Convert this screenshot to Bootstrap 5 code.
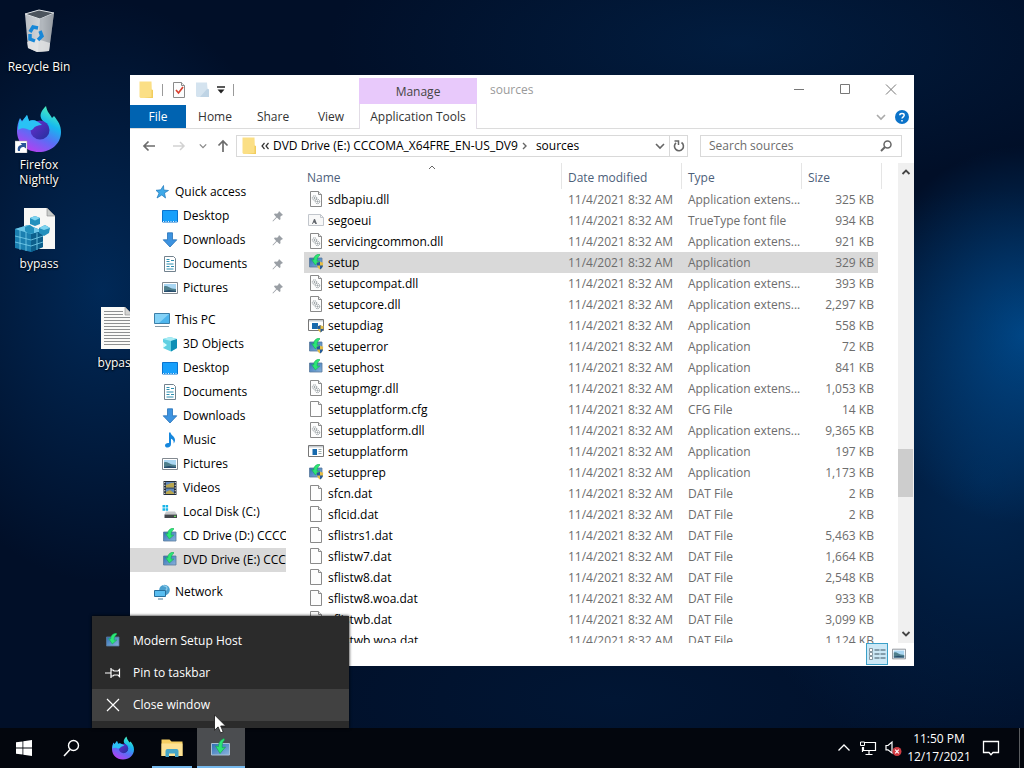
<!DOCTYPE html>
<html lang="en">
<head>
<meta charset="utf-8">
<meta name="viewport" content="width=device-width, initial-scale=1">
<title>sources</title>
<link rel="stylesheet" href="https://cdn.jsdelivr.net/npm/bootstrap@5.3.0/dist/css/bootstrap.min.css">
<style>
  body { font-family: "Open Sans", "Noto Sans", sans-serif; font-size: 12px; line-height: 16px; color: #000; background: #00040c; }
  svg { display: block; flex: none; }
  button { border: 0; background: none; padding: 0; color: inherit; }
  a { color: inherit; text-decoration: none; }
  .s16 { width: 16px; height: 16px; }

  .desk { min-height: 0; background:
    radial-gradient(ellipse 16% 26% at 100% 46%, rgba(0,88,164,.7), rgba(0,60,120,0) 100%),
    radial-gradient(ellipse 26% 40% at 96% 66%, rgba(0,56,112,.55), rgba(0,40,90,0) 100%),
    radial-gradient(ellipse 40% 20% at 72% 6%, rgba(2,42,86,.5), rgba(0,40,90,0) 100%),
    radial-gradient(ellipse 20% 40% at 10% 40%, rgba(0,58,118,.6), rgba(0,40,90,0) 100%),
    radial-gradient(ellipse 40% 20% at 60% 96%, rgba(0,38,80,.3), rgba(0,40,90,0) 100%),
    #010f28; }

  .shortcut { position: absolute; width: 76px; line-height: 15px; color: #fff; text-shadow: 0 1px 2px #000, 0 0 2px #000; text-align: center; }
  .shortcut svg { width: 48px; height: 48px; margin: 0 auto 4px; }

  .explorer { position: absolute; inset: 75px 110px 62px 130px; background: #fff; }
  .titlebar { height: 30px; }
  .tool-sep { width: 1px; height: 12px; background: #9a9a9a; }
  .context-tab { position: absolute; left: 229px; top: 3px; width: 118px; height: 51px; border: 1px solid #e2dce6; border-top: 0; border-bottom: 0; background: #fff; color: #444; }
  .context-tab a { height: 26px; line-height: 27px; background: #e8c9fb; text-align: center; margin: 0 -1px; }
  .context-tab a + a { height: 24px; line-height: 25px; background: none; color: #333; }
  .win-btn { width: 46px; height: 30px; display: grid; place-items: center; color: #777; }
  .ribbon { height: 24px; border-bottom: 1px solid #dcdcdc; color: #333; }
  .ribbon a { height: 23px; line-height: 24px; text-align: center; width: 58px; }
  .ribbon a.file-tab { width: 56px; background: #0063b1; color: #fff; }
  .addressbar { height: 34px; padding: 0 12px 0 11px; }
  .box { height: 22px; border: 1px solid #d9d9d9; background: #fff; }
  .path-box { margin-left: 5px; margin-right: 12px; }
  .search-box { width: 202px; }
  .search-box input { border: 0; outline: 0; padding: 0 0 0 8px; min-width: 0; color: #6d6d6d; }
  .search-box input::placeholder { color: #6d6d6d; opacity: 1; }
  .refresh { width: 18px; height: 20px; border-left: 1px solid #d9d9d9; display: grid; place-items: center; }

  .tree { width: 156px; padding-top: 17px; }
  .tree a { display: flex; align-items: center; height: 24px; gap: 5px; padding-left: 32px; white-space: nowrap; overflow: hidden; }
  .tree a.root { padding-left: 24px; }
  .tree .active { background: #d9d9d9; }
  .tree .pin { margin-left: auto; margin-right: 2px; }

  .files { padding: 0 20px 0 18px; overflow: hidden; }
  .files table { width: 100%; table-layout: fixed; border-collapse: separate; border-spacing: 0; }
  .files th { height: 26px; font-weight: 400; color: #4c607a; border-right: 1px solid #e5e5e5; padding: 4px 0 0 6px; position: relative; }
  .files th:first-child { padding-left: 3px; }
  .files th:last-child { border-right: 0; }
  .files th:last-child::after { content: ""; position: absolute; right: -4px; top: 0; bottom: 0; width: 1px; background: #e5e5e5; }
  .sort { position: absolute; left: 124px; top: 1px; }
  .files td { height: 21px; padding: 0 0 0 6px; white-space: nowrap; color: #6d6d6d; line-height: 21px; }
  .files td:first-child { padding-left: 4px; color: #000; }
  .files td:first-child div { display: flex; align-items: center; gap: 4px; }
  .files td:last-child { text-align: right; padding-right: 4px; }
  .files .picked td { background: #d9d9d9; }
  .rail { width: 16px; background: #f0f0f0; }
  .rail button { width: 16px; height: 18px; display: grid; place-items: center; }
  .rail .thumb { background: #cdcdcd; height: 48px; width: 15px; }
  .statusbar { height: 23px; padding-right: 4px; }
  .view-btn { width: 22px; height: 22px; display: grid; place-items: center; }
  .view-btn.on { border: 1px solid #3ba0c8; background: #cbe8f6; }

  .jump { position: absolute; left: 92px; bottom: 0; width: 257px; padding: 9px 0 7px; background: #2b2b2b; color: #fff; box-shadow: 0 0 3px #000; }
  .jump button { display: flex; align-items: center; width: 100%; height: 32px; gap: 12px; padding-left: 13px; }
  .jump button.hot { background: #414141; }
  .pointer { position: absolute; left: 214px; bottom: -6px; z-index: 5; }

  .taskbar { height: 40px; color: #fff; background: #03060d; }
  .task { width: 48px; height: 40px; display: grid; place-items: center; position: relative; }
  .task.running::after { content: ""; position: absolute; left: 4px; right: 4px; bottom: 0; height: 2px; background: #76b9ed; }
  .task.current { background: #4b4d50; }
  .task.current::after { left: 0; right: 0; }
  .apps { gap: 1px; margin-left: 3px; }
  .clock { width: 66px; text-align: center; line-height: 18px; }
  .alerts { margin: 0 19px 0 10px; }
  .peek { width: 5px; height: 40px; border-left: 1px solid #5b5d60; }
</style>
</head>
<body class="vh-100 d-flex flex-column overflow-hidden">

<svg width="0" height="0" class="position-absolute" aria-hidden="true">
  <defs>
    <linearGradient id="gScreen" x1="0" y1="0" x2="1" y2="1"><stop offset="0" stop-color="#2f6fb5"/><stop offset="1" stop-color="#8ab4dc"/></linearGradient>
    <linearGradient id="gFox" x1=".8" y1="0" x2=".3" y2="1"><stop offset="0" stop-color="#54f7b0"/><stop offset=".35" stop-color="#16b8f0"/><stop offset=".65" stop-color="#5b6df5"/><stop offset="1" stop-color="#b93df0"/></linearGradient>
    <linearGradient id="gGlobe" x1="0" y1="0" x2="1" y2="1"><stop offset="0" stop-color="#6a2fd0"/><stop offset="1" stop-color="#23309c"/></linearGradient>
    <linearGradient id="gBin" x1="0" y1="0" x2="1" y2="0"><stop offset="0" stop-color="#b9bdc3"/><stop offset=".6" stop-color="#d5d8dc"/><stop offset="1" stop-color="#8b9097"/></linearGradient>
    <symbol id="page" viewBox="0 0 16 16"><path d="M2.500.500h8l3 3v12h-11z" fill="#fdfdfd" stroke="#8a8a8a"/><path d="M10.500.500v3h3" fill="#eee" stroke="#8a8a8a"/></symbol>
    <symbol id="dll" viewBox="0 0 16 16"><use href="#page"/><g fill="none" stroke="#8d9599"><circle cx="6.500" cy="7" r="2.200" stroke-dasharray="1.200 .7"/><circle cx="6.500" cy="7" r=".6"/><circle cx="9.500" cy="10.500" r="2.200" stroke-dasharray="1.200 .7"/><circle cx="9.500" cy="10.500" r=".6"/></g></symbol>
    <symbol id="font" viewBox="0 0 16 16"><path d="M.5 2.500h12l3 3v8H.5z" fill="#f8f8f8" stroke="#c2c6cc"/><path d="M12.500 2.500v3h3" fill="none" stroke="#c2c6cc"/><path d="M4 12l2-5h1L9 12H7.300l-.5-1.300h-1.500L5 12z" fill="#63676d"/></symbol>
    <symbol id="setup" viewBox="0 0 16 16"><path d="M1.500 4h12.500v9H1.500z" fill="url(#gScreen)" stroke="#58789c" stroke-width=".8"/><path d="M11.500 0C7.500.500 5.500 3 5.800 6L3.600 5.600l3.700 5.400 4.500-4-2.600.2C9 5 9.500 3 11.500 1.700z" fill="#2be676" stroke="#12a04c" stroke-width=".5"/></symbol>
    <symbol id="guard" viewBox="0 0 16 16"><use href="#setup"/><path d="M12 7.500c1 .8 2 1 3.200 1 0 3.500-.7 5.500-3.200 7-2.500-1.500-3.200-3.500-3.200-7 1.200 0 2.200-.2 3.200-1z" fill="#e5bd46"/><path d="M12 7.500v4H8.900c-.1-1-.1-2-.1-3 1.200 0 2.200-.2 3.200-1zM12 11.500h3c-.4 2-1.400 3.200-3 4z" fill="#235a9c"/></symbol>
    <symbol id="app" viewBox="0 0 16 16"><path d="M.5 2.500h15v11H.5z" fill="#fff" stroke="#777"/><path d="M1 3h14v1.500H1z" fill="#c9ced3"/><path d="M4.500 6H9v6H4.500z" fill="#1769ad"/><path d="M10.500 6.500h3M10.500 8.500h3M10.500 10.500h3" stroke="#9aa"/></symbol>
    <symbol id="diag" viewBox="0 0 16 16"><path d="M.5 2.500h15v11H.5z" fill="#fff" stroke="#777"/><path d="M1 3h14v1.500H1z" fill="#c9ced3"/><path d="M4 6h6v6H4z" fill="#1769ad"/><path d="M12.500 8c1 .8 1.800 1 3 1 0 3.500-.7 5-3 6.500C10.200 14 9.500 12.500 9.500 9c1.200 0 2-.2 3-1z" fill="#e5bd46"/><path d="M12.500 8v4H9.700c-.2-1-.2-2-.2-3 1.200 0 2-.2 3-1zM12.500 12h2.700c-.4 1.700-1.200 2.600-2.700 3.500z" fill="#235a9c"/></symbol>
    <symbol id="folder" viewBox="0 0 16 18"><path d="M1.500.500h12l.3 8 1.200 1V17H2.500l-1-1z" fill="#fbdf85"/><path d="M13.500 8.500l1.500.5V17H6l7.500-1z" fill="#f2cd5d"/></symbol>
    <symbol id="star" viewBox="0 0 16 16"><path d="M9.500 1.500l.3 4.500 4.700.5-4 2.400 1 5.100-3.700-3-4.800 3 2-4.800L2 6.300l4.800-.5z" fill="#3fa9e8" stroke="#1c76b9" stroke-width=".7"/></symbol>
    <symbol id="desktop" viewBox="0 0 16 16"><path d="M.5 2.500h15v11.500H.5z" fill="#18a0fb" stroke="#0a74cf"/><path d="M1 13.500h14" stroke="#e4f3ff" stroke-dasharray="1 1.500"/></symbol>
    <symbol id="down" viewBox="0 0 16 16"><path d="M5.500.8h5v7h4.300L8 15 1.200 7.800h4.300z" fill="#3d93e0" stroke="#2671b8" stroke-width=".8"/></symbol>
    <symbol id="doc" viewBox="0 0 16 16"><path d="M2.500.500h9l2 2v13h-11z" fill="#fff" stroke="#72828e"/><path d="M4.500 3.500h3M4.500 5.500h3M9 4.500h3M4.500 8h7M4.500 10.500h3M9 10.500h3M4.500 13h7" stroke="#2d8fb0"/></symbol>
    <symbol id="pic" viewBox="0 0 16 16"><path d="M.5 2.500h15v11H.5z" fill="#fff" stroke="#828990"/><path d="M2 4h12v8H2z" fill="#a9d6f2"/><path d="M2 6.500c3-1.500 5 1.500 8 2l4 .5v3H2z" fill="#4f7f8c"/><path d="M2 11l5-1 7 1v1H2z" fill="#274d6d"/></symbol>
    <symbol id="pc" viewBox="0 0 16 16"><path d="M.5 1.500h15v10H.5z" fill="#4db5ed" stroke="#3c7fa8"/><path d="M1 2h14L5 11H1z" fill="#84d2f7"/><path d="M1 14.500h14" stroke="#8799a5"/></symbol>
    <symbol id="cube" viewBox="0 0 16 16"><path d="M1 3l7-2 7 2v9l-6 3.500L1 12z" fill="#5fd0e2"/><path d="M1 3l7-2 7 2-6 2z" fill="#a9ecf4"/><path d="M9 5l6-2v9l-6 3.500z" fill="#0e8fb5"/><path d="M1 6l4 3-4 3z" fill="#dff"/></symbol>
    <symbol id="music" viewBox="0 0 16 16"><path d="M7 .5h1.500c.5 3 4.500 3.800 4.500 7.500 0 1.500-.6 2.500-1.300 3.400C12 8.500 10.500 7.300 9 6.800V12c0 2-1.500 3.500-3.300 3.500S3 14.600 3 13.400C3 11.800 5 10.500 7 11z" fill="#1687dd"/></symbol>
    <symbol id="video" viewBox="0 0 16 16"><path d="M1.500 1h13v14h-13z" fill="#222c38"/><path d="M4 2h8v5.500H4zM4 8.500h8V14H4z" fill="#5f87bb"/><path d="M4 5c3 0 5-3 8-2v4.500H4zM4 12l4-2 4 3v1H4z" fill="#b9a64e"/><path d="M2.800 2v13M13.200 2v13" stroke="#fff" stroke-dasharray="1.200 1.500"/></symbol>
    <symbol id="disk" viewBox="0 0 16 16"><path d="M.5 1h2.500v2.500H.5zM3.600 1h2.500v2.500H3.600zM.5 4.200h2.500v2.500H.5zM3.600 4.200h2.500v2.500H3.600z" fill="#19b5e8"/><path d="M4 7.500h9l2 3H2.500z" fill="#c6c9cc"/><path d="M2.500 10.500h12.500v3.500H2.500z" fill="#44484c"/><path d="M12 12.300h2" stroke="#7f6"/></symbol>
    <symbol id="net" viewBox="0 0 16 16"><circle cx="10.500" cy="6" r="5.300" fill="#4a9fce"/><path d="M9 1.500c2 1 4 0 4 2.500s-2 2-2 3.500" fill="none" stroke="#8fcdea" stroke-width="1.300"/><path d="M.5 6.500h11v6H.5z" fill="#59bdf0" stroke="#276f9c"/><path d="M4 15h5" stroke="#467b98"/></symbol>
    <symbol id="pin" viewBox="0 0 12 12"><path d="M7 1l4 4-1.200.4-1.500 1.400.2 2.400-1 .8-2.600-2.400L1 11.500l-.5-.5 3.700-4L2 4.600l.8-1 2.400.2 1.400-1.600z" fill="#9a9fa5"/></symbol>
    <symbol id="fox" viewBox="0 0 48 48"><path d="M24 47C11 47 2 38 2 26c0-5 1-9 3-13l2 3 5-6 2 6c5-2 9 0 12 4l-5 3c-4 4-1 10 5 10 7 0 9-7 6-12-3-5-8-7-6-13 1-3 3-5 5-7 1 6 4 8 6 12l2-2c4 5 7 9 7 16 0 12-10 20-22 20z" fill="url(#gFox)"/><circle cx="25" cy="25" r="9.500" fill="url(#gGlobe)"/><path d="M5 14l2 3 5-7 2 6c4-2 9 0 13 4-4 0-7 1-9 4-2 2-4 1-6 0-3-1-6-1-9 1 0-4 1-8 2-11z" fill="#2ac2f5"/></symbol>
    <symbol id="chev" viewBox="0 0 10 10"><path d="M1 3l4 4 4-4" fill="none" stroke="currentColor" stroke-width="1.600"/></symbol>
  </defs>
</svg>

<main class="desk position-relative flex-grow-1">
  <a href="#" class="shortcut" style="left:1px;top:7px"><svg viewBox="0 0 48 48"><path d="M10 7l14-4 15 3-5 38-12 1-9-4z" fill="url(#gBin)"/><path d="M10 7l14-4 15 3-14 6z" fill="#4c545d" stroke="#d9dde1"/><path d="M25 12l14-6-5 38-11 1z" fill="#9ba1a8" opacity=".6"/><path d="M12 35l10-3 13 4-1 8-12 1-9-4z" fill="#ececec" opacity=".7"/><path d="M15 25l3-5 5 1M25 24l2 5-4 4M20 34l-5-2 0-5" fill="none" stroke="#1787d8" stroke-width="3.500"/></svg>Recycle Bin</a>
  <a href="#" class="shortcut" style="left:1px;top:105px"><svg viewBox="0 0 48 48"><use href="#fox"/><path d="M0 36h12v12H0z" fill="#fff" stroke="#999" stroke-width=".5"/><path d="M3 46c-1-4 1-6 4-6l-1.500-2H11v5.500L9 42c-3 0-4 1-4 4z" fill="#2a5599"/></svg>Firefox Nightly</a>
  <a href="#" class="shortcut" style="left:1px;top:204px"><svg viewBox="0 0 48 48"><path d="M9 4h23l8 8v33H9z" fill="#f7f7f5"/><path d="M32 4v8h8z" fill="#c9ccca" stroke="#888" stroke-width=".6"/><path d="M0 25l13-4 15 6v16l-12 5L0 44z" fill="#1b7fb0"/><path d="M0 25l13-4 15 6-12 3z" fill="#6cc6e8"/><path d="M16 30l12-3v16l-12 5z" fill="#0c5f8c"/><path d="M5 26v20M11 28v19M0 32l16 4 12-4M0 38l16 4 12-4M22 29v17" stroke="#7ad0ee" stroke-width=".8" fill="none"/><path d="M15 14l5-2 5 2v6l-5 2-5-2zM24 24l6-3 5 3-1 5-5 3-5-3zM10 23l5-2 4 3v5l-5 1-4-3z" fill="#2390bd"/><path d="M15 14l5-2 5 2-5 2.500zM24 24l6-3 5 3-6 2z" fill="#7dd3ef"/></svg>bypass</a>
  <a href="#" class="shortcut" style="left:79px;top:303px"><svg viewBox="0 0 48 48"><path d="M8 4h24l8 8v34H8z" fill="#fbfbf8"/><path d="M32 4v8h8z" fill="#d5d5d2" stroke="#888" stroke-width=".6"/><path d="M11 8.500h19M11 11.500h19M11 14.500h26M11 17.500h26M11 20.500h26M11 23.500h26M11 26.500h26M11 29.500h26M11 32.500h26M11 35.500h26M11 38.500h26M11 41.500h26" stroke="#8e9090"/></svg>bypass</a>

  <section class="explorer d-flex flex-column">
    <header class="titlebar d-flex align-items-center ps-2">
      <svg width="16" height="18"><use href="#folder"/></svg>
      <span class="tool-sep ms-2 me-2"></span>
      <button aria-label="Properties"><svg width="16" height="16"><use href="#page"/><path d="M5 8l2.500 3L12 5" fill="none" stroke="#d8402e" stroke-width="1.700"/></svg></button>
      <button class="ms-2" aria-label="New folder"><svg width="14" height="16" viewBox="0 0 14 16"><path d="M1 .5h11l.5 6 1.500 1V15H2L1 14z" fill="#d4e3ef"/><path d="M12 7l2 .5V15H5z" fill="#bfd4e5"/></svg></button>
      <button class="ms-2" aria-label="Customize toolbar"><svg width="8" height="8" viewBox="0 0 8 8"><path d="M0 1h8" stroke="#222" stroke-width="1.500"/><path d="M.5 3.500h7L4 7.500z" fill="#222"/></svg></button>
      <span class="tool-sep ms-2"></span>
      <span class="ms-auto"></span>
      <button class="win-btn" aria-label="Minimize"><svg width="12" height="12"><path d="M1 5.500h10" stroke="currentColor"/></svg></button>
      <button class="win-btn" aria-label="Maximize"><svg width="12" height="12"><path d="M1.500.500h9v9h-9z" fill="none" stroke="currentColor"/></svg></button>
      <button class="win-btn" aria-label="Close"><svg width="12" height="12"><path d="M1 .5l10 10M11 .5L1 10.500" stroke="currentColor"/></svg></button>
    </header>
    <div class="context-tab d-flex flex-column"><a href="#">Manage</a><a href="#">Application Tools</a></div>
    <div class="position-absolute" style="left:360px;top:7px;color:#9a9a9a">sources</div>
    <nav class="ribbon d-flex">
      <a href="#" class="file-tab">File</a><a href="#">Home</a><a href="#">Share</a><a href="#">View</a>
      <button class="ms-auto" aria-label="Expand ribbon" style="color:#aaa"><svg width="10" height="10"><use href="#chev"/></svg></button>
      <button class="ms-2 me-1" aria-label="Help"><svg width="16" height="16" viewBox="0 0 16 16"><circle cx="8" cy="8" r="7" fill="#0b73c9"/><path d="M5.800 6.300C5.800 4 10.200 4 10.200 6.300 10.200 7.800 8 7.800 8 9.600M8 11v1.500" fill="none" stroke="#fff" stroke-width="1.500"/></svg></button>
    </nav>
    <div class="addressbar d-flex align-items-center">
      <button aria-label="Back"><svg width="16" height="16"><path d="M14 8H3M7.500 3.500L3 8l4.500 4.500" fill="none" stroke="#6c6c6c" stroke-width="1.700"/></svg></button>
      <button class="ms-3" aria-label="Forward"><svg width="14" height="16"><path d="M0 8h11M7 4l4 4-4 4" fill="none" stroke="#d2d2d2" stroke-width="1.500"/></svg></button>
      <button class="ms-2 ps-1" aria-label="Recent" style="color:#888"><svg width="8" height="8"><use href="#chev"/></svg></button>
      <button class="ms-2" aria-label="Up"><svg width="16" height="16"><path d="M8 14V3M3.500 7.500L8 3l4.500 4.500" fill="none" stroke="#6c6c6c" stroke-width="1.700"/></svg></button>
      <div class="box path-box flex-grow-1 d-flex align-items-center text-nowrap">
        <svg width="16" height="18" class="ms-1"><use href="#folder"/></svg>
        <svg width="8" height="8" class="ms-1" viewBox="0 0 8 8"><path d="M3.500 1L1 4l2.500 3M7.500 1L5 4l2.500 3" fill="none" stroke="#333" stroke-width="1.200"/></svg>
        <a href="#" class="ms-1">DVD Drive (E:) CCCOMA_X64FRE_EN-US_DV9</a>
        <svg width="6" height="8" class="ms-1 me-2" viewBox="0 0 6 8"><path d="M1 1l3 3-3 3" fill="none" stroke="#666" stroke-width="1.400"/></svg>
        <a href="#">sources</a>
        <button class="ms-auto me-1" aria-label="Previous locations" style="color:#666"><svg width="10" height="10"><use href="#chev"/></svg></button>
        <button class="refresh" aria-label="Refresh"><svg width="14" height="14" viewBox="0 0 14 14"><path d="M4 3.800A4.500 4.500 0 1 0 9.500 3.500" fill="none" stroke="#666" stroke-width="1.600"/><path d="M2.500 2h4v4" fill="none" stroke="#666" stroke-width="1.500"/></svg></button>
      </div>
      <div class="box search-box d-flex align-items-center">
        <input class="flex-grow-1" type="text" placeholder="Search sources" aria-label="Search sources">
        <svg width="14" height="14" class="me-2" viewBox="0 0 14 14"><circle cx="8.500" cy="5.500" r="3.500" fill="none" stroke="#666" stroke-width="1.500"/><path d="M6 8L2 12" stroke="#666" stroke-width="1.900"/></svg>
      </div>
    </div>
    <div class="d-flex flex-grow-1 overflow-hidden" style="min-height:0">
      <nav class="tree flex-shrink-0 d-flex flex-column gap-2">
        <div>
          <a href="#" class="root"><svg class="s16"><use href="#star"/></svg>Quick access</a>
          <a href="#"><svg class="s16"><use href="#desktop"/></svg>Desktop<svg class="pin" width="12" height="12"><use href="#pin"/></svg></a>
          <a href="#"><svg class="s16"><use href="#down"/></svg>Downloads<svg class="pin" width="12" height="12"><use href="#pin"/></svg></a>
          <a href="#"><svg class="s16"><use href="#doc"/></svg>Documents<svg class="pin" width="12" height="12"><use href="#pin"/></svg></a>
          <a href="#"><svg class="s16"><use href="#pic"/></svg>Pictures<svg class="pin" width="12" height="12"><use href="#pin"/></svg></a>
        </div>
        <div>
          <a href="#" class="root"><svg class="s16"><use href="#pc"/></svg>This PC</a>
          <a href="#"><svg class="s16"><use href="#cube"/></svg>3D Objects</a>
          <a href="#"><svg class="s16"><use href="#desktop"/></svg>Desktop</a>
          <a href="#"><svg class="s16"><use href="#doc"/></svg>Documents</a>
          <a href="#"><svg class="s16"><use href="#down"/></svg>Downloads</a>
          <a href="#"><svg class="s16"><use href="#music"/></svg>Music</a>
          <a href="#"><svg class="s16"><use href="#pic"/></svg>Pictures</a>
          <a href="#"><svg class="s16"><use href="#video"/></svg>Videos</a>
          <a href="#"><svg class="s16"><use href="#disk"/></svg>Local Disk (C:)</a>
          <a href="#"><svg class="s16"><use href="#setup"/></svg>CD Drive (D:) CCCO</a>
          <a href="#" class="active"><svg class="s16"><use href="#setup"/></svg>DVD Drive (E:) CCCO</a>
        </div>
        <div><a href="#" class="root"><svg class="s16"><use href="#net"/></svg>Network</a></div>
      </nav>
      <div class="files flex-grow-1">
        <table>
          <colgroup><col><col style="width:120px"><col style="width:120px"><col style="width:76px"></colgroup>
          <thead><tr><th>Name<svg class="sort" width="8" height="6" viewBox="0 0 8 6"><path d="M1 5l3-3 3 3" fill="none" stroke="#666"/></svg></th><th>Date modified</th><th>Type</th><th>Size</th></tr></thead>
          <tbody>
            <tr><td><div><svg class="s16"><use href="#dll"/></svg>sdbapiu.dll</div></td><td>11/4/2021 8:32 AM</td><td>Application extens...</td><td>325 KB</td></tr>
            <tr><td><div><svg class="s16"><use href="#font"/></svg>segoeui</div></td><td>11/4/2021 8:32 AM</td><td>TrueType font file</td><td>934 KB</td></tr>
            <tr><td><div><svg class="s16"><use href="#dll"/></svg>servicingcommon.dll</div></td><td>11/4/2021 8:32 AM</td><td>Application extens...</td><td>921 KB</td></tr>
            <tr class="picked"><td><div><svg class="s16"><use href="#guard"/></svg>setup</div></td><td>11/4/2021 8:32 AM</td><td>Application</td><td>329 KB</td></tr>
            <tr><td><div><svg class="s16"><use href="#dll"/></svg>setupcompat.dll</div></td><td>11/4/2021 8:32 AM</td><td>Application extens...</td><td>393 KB</td></tr>
            <tr><td><div><svg class="s16"><use href="#dll"/></svg>setupcore.dll</div></td><td>11/4/2021 8:32 AM</td><td>Application extens...</td><td>2,297 KB</td></tr>
            <tr><td><div><svg class="s16"><use href="#diag"/></svg>setupdiag</div></td><td>11/4/2021 8:32 AM</td><td>Application</td><td>558 KB</td></tr>
            <tr><td><div><svg class="s16"><use href="#guard"/></svg>setuperror</div></td><td>11/4/2021 8:32 AM</td><td>Application</td><td>72 KB</td></tr>
            <tr><td><div><svg class="s16"><use href="#setup"/></svg>setuphost</div></td><td>11/4/2021 8:32 AM</td><td>Application</td><td>841 KB</td></tr>
            <tr><td><div><svg class="s16"><use href="#dll"/></svg>setupmgr.dll</div></td><td>11/4/2021 8:32 AM</td><td>Application extens...</td><td>1,053 KB</td></tr>
            <tr><td><div><svg class="s16"><use href="#page"/></svg>setupplatform.cfg</div></td><td>11/4/2021 8:32 AM</td><td>CFG File</td><td>14 KB</td></tr>
            <tr><td><div><svg class="s16"><use href="#dll"/></svg>setupplatform.dll</div></td><td>11/4/2021 8:32 AM</td><td>Application extens...</td><td>9,365 KB</td></tr>
            <tr><td><div><svg class="s16"><use href="#app"/></svg>setupplatform</div></td><td>11/4/2021 8:32 AM</td><td>Application</td><td>197 KB</td></tr>
            <tr><td><div><svg class="s16"><use href="#guard"/></svg>setupprep</div></td><td>11/4/2021 8:32 AM</td><td>Application</td><td>1,173 KB</td></tr>
            <tr><td><div><svg class="s16"><use href="#page"/></svg>sfcn.dat</div></td><td>11/4/2021 8:32 AM</td><td>DAT File</td><td>2 KB</td></tr>
            <tr><td><div><svg class="s16"><use href="#page"/></svg>sflcid.dat</div></td><td>11/4/2021 8:32 AM</td><td>DAT File</td><td>2 KB</td></tr>
            <tr><td><div><svg class="s16"><use href="#page"/></svg>sflistrs1.dat</div></td><td>11/4/2021 8:32 AM</td><td>DAT File</td><td>5,463 KB</td></tr>
            <tr><td><div><svg class="s16"><use href="#page"/></svg>sflistw7.dat</div></td><td>11/4/2021 8:32 AM</td><td>DAT File</td><td>1,664 KB</td></tr>
            <tr><td><div><svg class="s16"><use href="#page"/></svg>sflistw8.dat</div></td><td>11/4/2021 8:32 AM</td><td>DAT File</td><td>2,548 KB</td></tr>
            <tr><td><div><svg class="s16"><use href="#page"/></svg>sflistw8.woa.dat</div></td><td>11/4/2021 8:32 AM</td><td>DAT File</td><td>933 KB</td></tr>
            <tr><td><div><svg class="s16"><use href="#page"/></svg>sflistwb.dat</div></td><td>11/4/2021 8:32 AM</td><td>DAT File</td><td>3,099 KB</td></tr>
            <tr><td><div><svg class="s16"><use href="#page"/></svg>sflistwb.woa.dat</div></td><td>11/4/2021 8:32 AM</td><td>DAT File</td><td>1,124 KB</td></tr>
          </tbody>
        </table>
      </div>
      <div class="rail d-flex flex-column flex-shrink-0">
        <button aria-label="Scroll up"><svg width="10" height="10" viewBox="0 0 10 10"><path d="M1.500 7L5 3.500 8.500 7" fill="none" stroke="#444" stroke-width="1.800"/></svg></button>
        <span style="flex:268"></span><span class="thumb"></span><span style="flex:128"></span>
        <button aria-label="Scroll down"><svg width="10" height="10" viewBox="0 0 10 10"><path d="M1.500 3L5 6.500 8.500 3" fill="none" stroke="#444" stroke-width="1.800"/></svg></button>
      </div>
    </div>
    <footer class="statusbar d-flex justify-content-end">
      <button class="view-btn on" aria-label="Details"><svg width="18" height="14" viewBox="0 0 18 14"><path d="M1.500 1.500h3v3h-3zM1.500 5.500h3v3h-3zM1.500 9.500h3v3h-3z" fill="#fff" stroke="#7c8c96" stroke-width=".9"/><path d="M6.500 3h11M6.500 7h11M6.500 11h11" stroke="#3d5360" stroke-dasharray="5 1"/></svg></button>
      <button class="view-btn" aria-label="Large icons"><svg width="14" height="16"><use href="#pic"/></svg></button>
    </footer>
  </section>

  <div class="jump">
    <button><svg class="s16"><use href="#setup"/></svg>Modern Setup Host</button>
    <button><svg class="s16" viewBox="0 0 16 16"><path d="M0 8h6M6 3v10M6 5h2l1 1h4l1.500-1.500v7L13 10H9l-1 1H6" fill="none" stroke="#fff" stroke-width="1.200"/></svg>Pin to taskbar</button>
    <button class="hot"><svg class="s16" viewBox="0 0 16 16"><path d="M2 2l12 12M14 2L2 14" stroke="#fff" stroke-width="1.200"/></svg>Close window</button>
  </div>
  <svg class="pointer" width="13" height="20" viewBox="0 0 13 20"><path d="M.5.800v15.500l3.600-3.400 2.500 6 2.600-1.100-2.500-5.800h5z" fill="#fff" stroke="#222" stroke-width=".9"/></svg>
</main>

<footer class="taskbar d-flex align-items-center flex-shrink-0">
  <button class="task" aria-label="Start"><svg width="16" height="16" viewBox="0 0 16 16"><path d="M0 2.300L6.500 1.400v6.200H0zM7.300 1.300L16 0v7.600H7.300zM0 8.400h6.500v6.200L0 13.700zM7.300 8.400H16V16l-8.700-1.300z" fill="#fff"/></svg></button>
  <button class="task" aria-label="Search"><svg width="18" height="18" viewBox="0 0 18 18"><circle cx="10.500" cy="6.500" r="5" fill="none" stroke="#fff" stroke-width="1.400"/><path d="M7 10.500L1 17" stroke="#fff" stroke-width="1.500"/></svg></button>
  <div class="apps d-flex">
    <button class="task" aria-label="Firefox Nightly"><svg width="24" height="24"><use href="#fox"/></svg></button>
    <button class="task running" aria-label="File Explorer"><svg width="22" height="20" viewBox="0 0 22 20"><path d="M.5 1.500h8l2 2h11V18H.5z" fill="#f7cf62"/><path d="M.5 5.500h21V18H.5z" fill="#fde294"/><path d="M4.500 19v-6q0-2 2-2h9q2 0 2 2v6H14v-3.500H8V19z" fill="#45a5c8"/></svg></button>
    <button class="task running current" aria-label="Modern Setup Host"><svg width="22" height="22" viewBox="0 0 22 22"><path d="M1.500 6.500h18v11.500h-18z" fill="url(#gScreen)" stroke="#a9bfd4"/><path d="M14 1.500C10 3 8.500 6 8.500 9.500L5.500 9l4.500 7.500 5.500-6.500-3.300.6C12 7 12.500 5 14.500 3z" fill="#2be676" stroke="#12a04c" stroke-width=".6"/></svg></button>
  </div>
  <button class="ms-auto" aria-label="Show hidden icons"><svg width="14" height="14" viewBox="0 0 14 14"><path d="M1.500 9.500L7 4l5.500 5.500" fill="none" stroke="#fff" stroke-width="1.300"/></svg></button>
  <button class="ms-2" aria-label="Network"><svg width="18" height="16" viewBox="0 0 18 16"><path d="M5 2.500h11.500v8H4.500V7M10 11v3M6.500 14.500h7M3.500 7v5" fill="none" stroke="#fff" stroke-width="1.200"/><path d="M1.500 2h4v3.500h-4z" fill="#03060d" stroke="#fff"/></svg></button>
  <button class="ms-2" aria-label="Volume muted"><svg width="17" height="16" viewBox="0 0 17 16"><path d="M1 5.500h2L7 2v11L3 9.800H1z" fill="none" stroke="#fff" stroke-width="1.200"/><circle cx="12" cy="11.500" r="4.500" fill="#d13b42"/><path d="M10.200 9.700l3.600 3.600M13.800 9.700l-3.600 3.600" stroke="#fff" stroke-width="1.200"/></svg></button>
  <time class="clock ms-1">11:50 PM<br>12/17/2021</time>
  <button class="alerts" aria-label="Notifications"><svg width="18" height="18" viewBox="0 0 18 18"><path d="M1.500 2.500h15v11H11L9 15.800 7 13.500H1.500z" fill="none" stroke="#fff" stroke-width="1.300"/></svg></button>
  <button class="peek" aria-label="Show desktop"></button>
</footer>
<script src="https://cdn.jsdelivr.net/npm/bootstrap@5.3.0/dist/js/bootstrap.bundle.min.js"></script>
</body>
</html>
